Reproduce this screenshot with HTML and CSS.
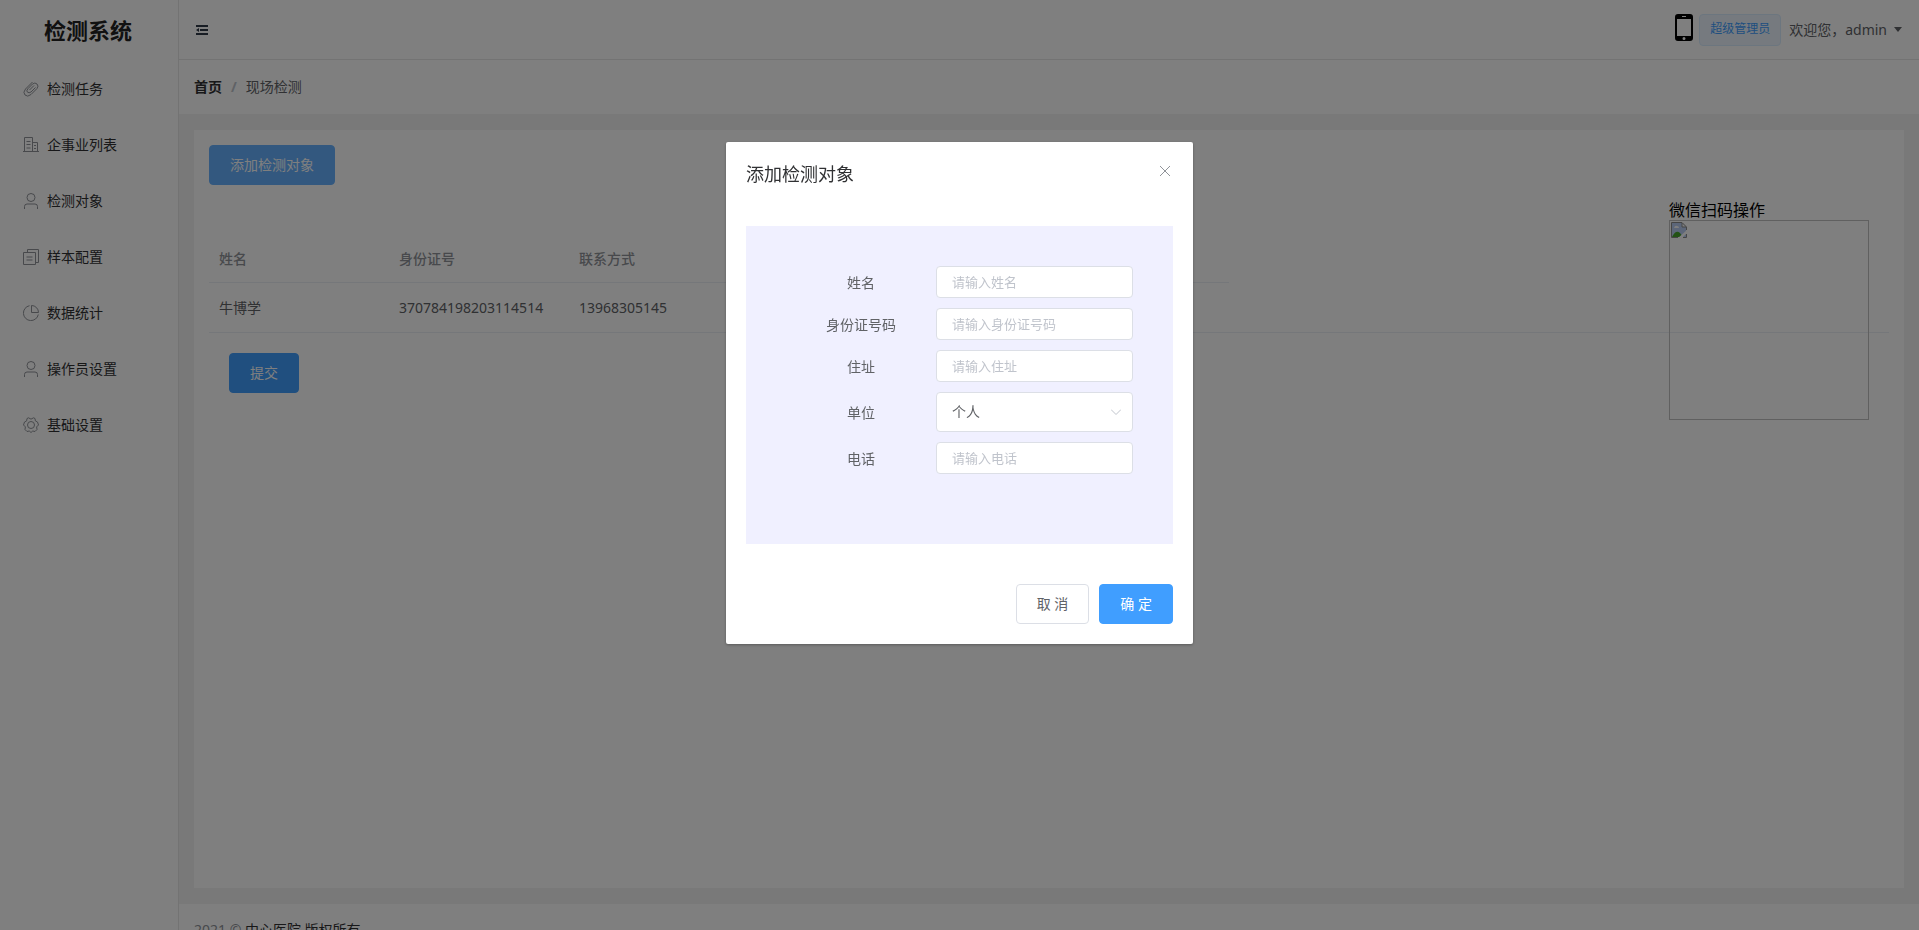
FILE: index.html
```html
<!DOCTYPE html>
<html lang="zh-CN">
<head>
<meta charset="utf-8">
<title>检测系统</title>
<link rel="stylesheet" href="styles.css">
</head>
<body>
<div class="app">
  <aside class="sidebar">
    <h1 class="brand">检测系统</h1>
    <nav class="menu">
      <a class="menu-item" href="#"><svg class="icon" viewBox="0 0 16 16"><path d="M9.500 1 2.500 8Q-.5 11.500 2 14T8 13.500L14 7.500Q16 5 14 3T9.500 3L4.800 7.800Q3 10 4.500 11.200T8 11L12.500 6.500M11 4.500 6.500 9"/></svg>检测任务</a>
      <a class="menu-item" href="#"><svg class="icon" viewBox="0 0 16 16"><path d="M0 14.500H16M1.500 14.500V.5H9.500V14.500M9.500 5.500H14.500V14.500M3.500 4.500H7.500M3.500 7.500H7.500M3.500 11H7.500M11 8.500H13M11 11.500H13"/></svg>企事业列表</a>
      <a class="menu-item" href="#"><svg class="icon" viewBox="0 0 16 16"><circle cx="8" cy="4.500" r="4"/><path d="M1.500 16V13.500Q1.500 11 4 11H12Q14.500 11 14.500 13.500V16"/></svg>检测对象</a>
      <a class="menu-item" href="#"><svg class="icon" viewBox="0 0 16 16"><path d="M.5 3.500H12.500V15.500H.5ZM4.500 3V.5H15.500V13.500H13M3.500 8H9.500M3.500 11H9.500"/></svg>样本配置</a>
      <a class="menu-item" href="#"><svg class="icon" viewBox="0 0 16 16"><path d="M6.500.7A7.500 7.500 0 1 0 15.300 9.500M8.500.5V7.500H15.500A7 7 0 0 0 8.500.5Z"/></svg>数据统计</a>
      <a class="menu-item" href="#"><svg class="icon" viewBox="0 0 16 16"><circle cx="8" cy="4.500" r="4"/><path d="M1.500 16V13.500Q1.500 11 4 11H12Q14.500 11 14.500 13.500V16"/></svg>操作员设置</a>
      <a class="menu-item" href="#"><svg class="icon" viewBox="0 0 16 16"><circle cx="8" cy="8" r="3.500"/><path d="M5.500.8Q8 3.500 10.500.8L12 1.500Q11.500 4.500 14.500 5L15.500 8Q12.500 9.500 14 12.500L12 14.500Q9.500 13 8 15.500 6.500 13 4 14.500L2 12.500Q3.500 9.500.5 8L1.500 5Q4.500 4.500 4 1.500Z"/></svg>基础设置</a>
    </nav>
  </aside>
  <div class="main">
    <header class="topbar">
      <button class="plain" type="button" aria-label="收起菜单"><svg class="fold" viewBox="0 0 12 10"><path d="M0 0H12V2H0ZM4 4H12V6H4ZM0 8H12V10H0ZM3 3V7L0 5Z"/></svg></button>
      <div class="account">
        <svg class="phone" viewBox="0 0 18 27"><path fill-rule="evenodd" d="M3 0H15Q18 0 18 3V24Q18 27 15 27H3Q0 27 0 24V3Q0 0 3 0ZM2 5V22H16V5ZM7 2V3H11V2ZM9 23A1.500 1.500 0 1 0 9 26 1.500 1.500 0 1 0 9 23Z"/></svg>
        <span class="tag">超级管理员</span>
        <button class="plain user" type="button">欢迎您，admin<svg class="caret" viewBox="0 0 8 5"><path d="M0 0H8L4 5Z"/></svg></button>
      </div>
    </header>
    <nav class="breadcrumb"><a class="home" href="#">首页</a><span class="slash">/</span><span>现场检测</span></nav>
    <main class="content">
      <section class="panel">
        <button class="btn btn-primary btn-hover" type="button">添加检测对象</button>
        <aside class="qr">
          <div>微信扫码操作</div>
          <div class="qr-image"><svg class="broken" viewBox="0 0 16 16"><path fill="#b9cdf2" d="M1 1H11L15 5V15H1Z"/><path fill="#fff" d="M3 6Q4 3 6 4 8 4 8 6ZM11 1 15 5H11Z"/><path fill="#46a52b" d="M1 15Q5 7 9 11L12 15Z"/><path fill="#fff" d="M16 8V11L11 16H7Z"/><path fill="none" stroke="#8a8a8a" d="M7 15.500H.5V.5H11L15.500 5V8M11 1V5H15M12 15.500H15.500V12"/></svg></div>
        </aside>
        <div class="table-wrap">
          <table class="table">
            <thead><tr><th>姓名</th><th>身份证号</th><th>联系方式</th><th class="rest"></th></tr></thead>
            <tbody><tr><td>牛博学</td><td>370784198203114514</td><td>13968305145</td><td></td></tr></tbody>
          </table>
        </div>
        <button class="btn btn-primary submit" type="button">提交</button>
      </section>
    </main>
    <footer class="footer">2021 © <a href="#">中心医院 版权所有</a></footer>
  </div>
</div>
<div class="overlay">
  <div class="dialog" role="dialog" aria-labelledby="dialog-title">
    <div class="dialog-header">
      <h2 class="dialog-title" id="dialog-title">添加检测对象</h2>
      <button class="plain" type="button" aria-label="关闭"><svg class="close" viewBox="0 0 10 10"><path d="M0 0 10 10M10 0 0 10"/></svg></button>
    </div>
    <form class="form">
      <label for="name">姓名</label><input class="field" id="name" type="text" placeholder="请输入姓名">
      <label for="idno">身份证号码</label><input class="field" id="idno" type="text" placeholder="请输入身份证号码">
      <label for="address">住址</label><input class="field" id="address" type="text" placeholder="请输入住址">
      <label for="unit">单位</label>
      <div class="select"><select class="field tall" id="unit"><option>个人</option></select><svg class="chevron" viewBox="0 0 10 6"><path d="M0 .5 5 5.500 10 .5"/></svg></div>
      <label for="phone">电话</label><input class="field" id="phone" type="text" placeholder="请输入电话">
    </form>
    <div class="dialog-footer">
      <button class="btn btn-default" type="button">取 消</button>
      <button class="btn btn-primary" type="button">确 定</button>
    </div>
  </div>
</div>
</body>
</html>
```
FILE: styles.css
```css
* { box-sizing: border-box; }
body {
  margin: 0;
  font-family: "Noto Sans", "Noto Sans CJK SC", sans-serif;
  font-size: 14px;
  font-weight: 400;
  line-height: 20px;
  color: #606266;
}
button, input, select { font: inherit; color: inherit; }
a { color: inherit; text-decoration: none; }
.plain { display: flex; align-items: center; padding: 0; border: 0; background: none; }
.app { display: flex; height: 100vh; overflow: hidden; }

.sidebar { flex: 0 0 179px; border-right: 1px solid #e6e6e6; background: #fff; }
.brand {
  margin: 0;
  padding-left: 44px;
  font-size: 22px;
  font-weight: 700;
  line-height: 61px;
  color: #222;
}
.menu-item {
  display: flex;
  align-items: center;
  gap: 8px;
  height: 56px;
  padding-left: 23px;
  color: #303133;
}
.icon { width: 16px; height: 16px; fill: none; stroke: #909399; }

.main { display: flex; flex: 1; flex-direction: column; min-width: 0; background: #fff; }
.topbar {
  display: flex;
  flex: 0 0 60px;
  align-items: center;
  justify-content: space-between;
  padding: 0 17px;
  border-bottom: 1px solid #e6e6e6;
}
.fold { width: 12px; height: 10px; fill: #303a48; }
.account { display: flex; align-items: center; }
.phone { width: 18px; height: 27px; margin: 0 6px 4px 0; }
.tag {
  height: 32px;
  margin-right: 8px;
  padding: 0 10px;
  border: 1px solid #d9ecff;
  border-radius: 4px;
  background: #ecf5ff;
  font-size: 12px;
  line-height: 28px;
  color: #409eff;
}
.caret { width: 8px; height: 5px; margin-left: 7px; fill: #606266; }
.breadcrumb { display: flex; flex: 0 0 54px; align-items: center; padding-left: 15px; }
.home { font-weight: 700; color: #303133; }
.slash { margin: 0 9px; font-weight: 700; color: #c0c4cc; }
.content { flex: 1; min-height: 0; padding: 16px 15px; background: #f3f3f3; }
.panel { height: 100%; padding: 15px; background: #fff; }
.footer {
  flex: 0 0 26px;
  overflow: hidden;
  padding-left: 15px;
  line-height: 52px;
  color: #909399;
}
.footer a { color: #303133; }

.btn {
  height: 40px;
  padding: 0 20px;
  border: 1px solid #dcdfe6;
  border-radius: 4px;
  background: #fff;
}
.btn-primary { border-color: #409eff; background: #409eff; color: #fff; }
.btn-hover { display: block; border-color: #66b1ff; background: #66b1ff; }
.submit { margin: 20px 0 0 20px; }

.qr { float: right; margin: 16px 20px 0 0; font-size: 16px; line-height: 19px; color: #000; }
.qr-image { width: 200px; height: 200px; padding: 1px; border: 1px solid #c0c0c0; }
.broken { display: block; width: 16px; height: 16px; }

.table-wrap { margin-top: 50px; border-bottom: 1px solid #ebeef5; }
.table { width: 1020px; table-layout: fixed; border-collapse: separate; border-spacing: 0; }
.table th, .table td { height: 49px; padding: 0 10px; text-align: left; }
.table th { height: 48px; border-bottom: 1px solid #ebeef5; font-weight: 500; color: #909399; }
.table .rest { width: 480px; }

.overlay { position: fixed; inset: 0; padding-top: 142px; background: rgba(0, 0, 0, .5); }
.dialog {
  width: 467px;
  margin: 0 auto;
  border-radius: 2px;
  background: #fff;
  box-shadow: 0 1px 3px rgba(0, 0, 0, .3);
}
.dialog-header {
  display: flex;
  align-items: flex-start;
  justify-content: space-between;
  padding: 20px 23px 10px 20px;
}
.dialog-title { margin: 0; font-size: 18px; font-weight: 400; line-height: 24px; color: #303133; }
.dialog-header .plain { height: 18px; }
.close { width: 10px; height: 10px; overflow: visible; stroke: #909399; }
.form {
  display: grid;
  grid-template-columns: 150px 1fr;
  row-gap: 10px;
  align-items: center;
  margin: 30px 20px;
  padding: 40px 40px 70px;
  background: #f0f0ff;
  text-align: center;
}
.form label { padding-top: 2px; }
.field {
  width: 100%;
  height: 32px;
  padding: 0 15px;
  border: 1px solid #dcdfe6;
  border-radius: 4px;
  background: #fff;
  font-size: 13px;
}
.field::placeholder { color: #c0c4cc; }
.select { position: relative; }
.tall { display: block; height: 40px; appearance: none; font-size: 14px; }
.chevron {
  position: absolute;
  top: 17px;
  right: 12px;
  width: 10px;
  height: 6px;
  fill: none;
  stroke: #c0c4cc;
}
.dialog-footer { display: flex; justify-content: flex-end; gap: 10px; padding: 10px 20px 20px; }
```
